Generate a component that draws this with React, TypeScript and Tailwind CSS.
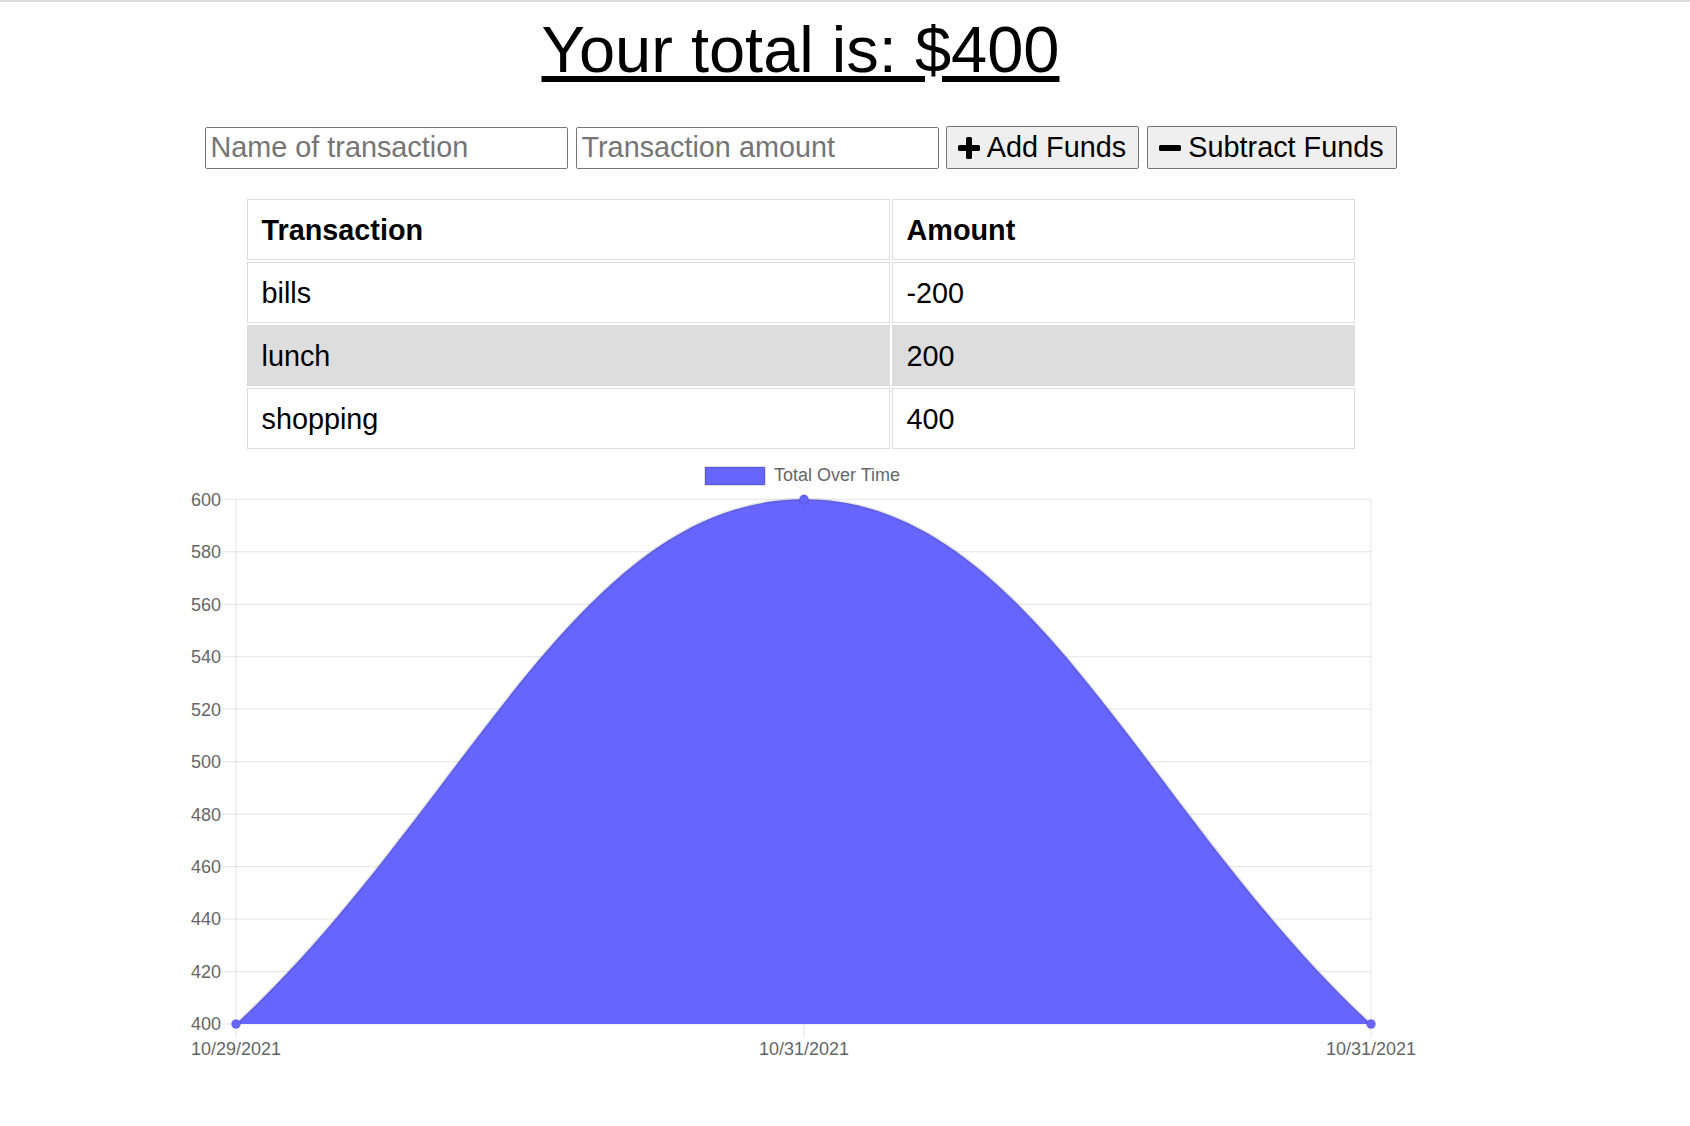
const rows = [
  { name: 'bills', amount: '-200' },
  { name: 'lunch', amount: '200' },
  { name: 'shopping', amount: '400' },
];

const yTicks = [600, 580, 560, 540, 520, 500, 480, 460, 440, 420, 400];

// chart geometry (svg coordinates)
const top = 44.3;
const bottom = 569;
const left = 75;
const mid = 643;
const right = 1210;
const step = (bottom - top) / 10;

function PlusIcon() {
  return (
    <svg width="22" height="22" viewBox="0 0 22 22" className="shrink-0">
      <rect x="8" y="0" width="6" height="22" rx="1.5" fill="#000" />
      <rect x="0" y="8" width="22" height="6" rx="1.5" fill="#000" />
    </svg>
  );
}

function MinusIcon() {
  return (
    <svg width="22" height="22" viewBox="0 0 22 22" className="shrink-0">
      <rect x="0" y="8" width="22" height="6" rx="1.5" fill="#000" />
    </svg>
  );
}

function Chart() {
  const area = `M${left},${bottom} C302.2,359.1 416,${top} ${mid},${top} C870,${top} 983.2,359.1 ${right},${bottom}`;
  return (
    <svg width="1280" height="620" viewBox="0 0 1280 620" className="block">
      {/* legend */}
      <rect x="544" y="12" width="60" height="18" fill="#6666ff" stroke="rgba(0,0,0,0.12)" strokeWidth="2" />
      <text x="613" y="26.4" fontSize="18" fill="#666">
        Total Over Time
      </text>

      {/* grid */}
      {yTicks.map((t, i) => {
        const y = top + i * step;
        return (
          <g key={t}>
            <line x1="61" x2={right} y1={y} y2={y} stroke="rgba(0,0,0,0.1)" strokeWidth="1" />
            <text x="60" y={y + 6.4} fontSize="18" fill="#666" textAnchor="end">
              {t}
            </text>
          </g>
        );
      })}
      {[left, mid, right].map((x) => (
        <line key={x} x1={x} x2={x} y1={top} y2="583" stroke="rgba(0,0,0,0.1)" strokeWidth="1" />
      ))}

      {/* data */}
      <path d={`${area} Z`} fill="#6666ff" />
      <path d={area} fill="none" stroke="rgba(0,0,0,0.1)" strokeWidth="3" />
      {[
        [left, bottom],
        [mid, top],
        [right, bottom],
      ].map(([x, y]) => (
        <circle key={x} cx={x} cy={y} r="4.5" fill="#6666ff" stroke="rgba(0,0,0,0.1)" strokeWidth="1.5" />
      ))}

      {/* x labels */}
      {[
        [left, '10/29/2021'],
        [mid, '10/31/2021'],
        [right, '10/31/2021'],
      ].map(([x, label], i) => (
        <text key={i} x={x} y="600.4" fontSize="18" fill="#666" textAnchor="middle">
          {label}
        </text>
      ))}
    </svg>
  );
}

export default function App() {
  return (
    <div className="min-h-screen bg-white text-black font-['Liberation_Sans',Arial,sans-serif]">
      <div className="h-[2px] bg-[#dcdcdc]"></div>

      <div className="w-[1601px] flex flex-col items-center">
        <h1 className="mt-[16px] text-[65px] leading-[64px] underline">Your total is: $400</h1>

        <div className="mt-[44px] flex items-end">
          <input
            type="text"
            placeholder="Name of transaction"
            className="w-[363px] h-[42px] pl-[5px] text-[28.8px] border border-[#767676] rounded-[2px] placeholder:text-[#757575] outline-none"
          />
          <input
            type="number"
            placeholder="Transaction amount"
            className="ml-[8px] w-[363px] h-[42px] pl-[5px] text-[28.8px] border border-[#767676] rounded-[2px] placeholder:text-[#757575] outline-none"
          />
          <button className="ml-[7px] w-[193px] h-[43px] flex items-center justify-center gap-[7px] text-[28.8px] bg-[#efefef] border border-[#767676] rounded-[2px]">
            <PlusIcon />
            Add Funds
          </button>
          <button className="ml-[8px] w-[250px] h-[43px] flex items-center justify-center gap-[7px] text-[28.8px] bg-[#efefef] border border-[#767676] rounded-[2px]">
            <MinusIcon />
            Subtract Funds
          </button>
        </div>

        <table className="mt-[28px] w-[1112px] table-fixed border-separate border-spacing-[2px] text-left text-[28.8px]">
          <colgroup>
            <col className="w-[643px]" />
            <col className="w-[463px]" />
          </colgroup>
          <thead>
            <tr>
              <th className="border border-[#dddddd] px-[14px] pt-[16px] pb-[14px] leading-[29px] font-bold">Transaction</th>
              <th className="border border-[#dddddd] px-[14px] pt-[16px] pb-[14px] leading-[29px] font-bold">Amount</th>
            </tr>
          </thead>
          <tbody>
            {rows.map((r, i) => (
              <tr key={r.name} className={i === 1 ? 'bg-[#dddddd]' : ''}>
                <td className="border border-[#dddddd] px-[14px] pt-[16px] pb-[14px] leading-[29px]">{r.name}</td>
                <td className="border border-[#dddddd] px-[14px] pt-[16px] pb-[14px] leading-[29px]">{r.amount}</td>
              </tr>
            ))}
          </tbody>
        </table>

        <div className="mt-[4px]">
          <Chart />
        </div>
      </div>
    </div>
  );
}
